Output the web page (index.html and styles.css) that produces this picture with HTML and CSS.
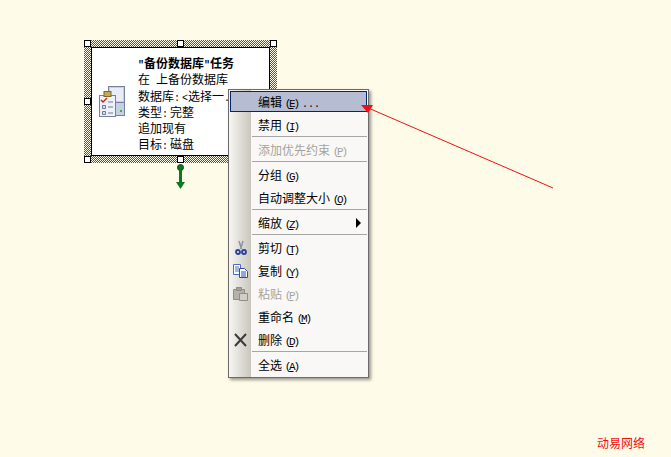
FILE: index.html
```html
<!DOCTYPE html>
<html lang="zh-CN">

<head>
      <meta charset="UTF-8">
      <title>备份数据库任务</title>
      <link rel="stylesheet" href="styles.css">
</head>

<body>
      <div class="canvas">

            <!-- task node -->
            <div class="task-frame">
                  <span class="handle h-tl"></span>
                  <span class="handle h-tc"></span>
                  <span class="handle h-tr"></span>
                  <span class="handle h-ml"></span>
                  <span class="handle h-mr"></span>
                  <span class="handle h-bl"></span>
                  <span class="handle h-bc"></span>
                  <span class="handle h-br"></span>
                  <div class="task-box">
                        <svg class="task-icon" width="27" height="32" viewBox="0 0 27 32">
                              <rect x="9.5" y="0.5" width="16" height="29" fill="#c5d0e4" stroke="#76829c" />
                              <rect x="11" y="2" width="13" height="13" fill="#e8edf7" />
                              <rect x="10" y="16" width="15" height="1" fill="#76829c" />
                              <rect x="21" y="24" width="2" height="2" fill="#30c040" />
                              <rect x="0.5" y="9.5" width="16" height="21" fill="#eef1f8" stroke="#76829c" />
                              <rect x="5" y="5.5" width="7" height="5" fill="#c9a94a" stroke="#7a6a2c" />
                              <path d="M2 14l2 2 4-4" fill="none" stroke="#d02020" stroke-width="1.4" />
                              <path d="M3.5 19.5h3v3h-3zM3.5 25.5h3v3h-3z" fill="#dde3f0" stroke="#6d7a96" />
                              <path d="M9 16h5M9 21h5M9 27h5" stroke="#6d7a96" />
                        </svg>
                        <div class="task-text">
                              <div class="task-line task-title"><span class="key">"</span>备份数据库<span class="key">"</span>任务</div>
                              <div class="task-line">在<span class="key"> </span>上备份数据库</div>
                              <div class="task-line">数据库<span class="key tight">: </span><span class="key">&lt;</span>选择一<span class="key">.</span></div>
                              <div class="task-line">类型<span class="key tight">: </span>完整</div>
                              <div class="task-line">追加现有</div>
                              <div class="task-line">目标<span class="key tight">: </span>磁盘</div>
                        </div>
                  </div>
            </div>

            <!-- green connector under the node -->
            <svg class="connector" width="13" height="28" viewBox="0 0 13 28">
                  <circle cx="6.5" cy="4.5" r="3" fill="#0a7a1e" stroke="#064d12" />
                  <path d="M5 7h3v13h-3z" fill="#0a7a1e" />
                  <path d="M2 19h9l-4.500 7z" fill="#0a7a1e" />
            </svg>

            <!-- context menu -->
            <div class="menu">
                  <div class="menu-item active"><span class="gutter"></span><span class="label">编辑 <span class="mnemonic">(<u>E</u>)</span><span class="dots">...</span></span></div>
                  <div class="menu-item"><span class="gutter"></span><span class="label">禁用 <span class="mnemonic">(<u>I</u>)</span></span></div>
                  <div class="menu-sep"></div>
                  <div class="menu-item disabled"><span class="gutter"></span><span class="label">添加优先约束 <span class="mnemonic">(<u>P</u>)</span></span></div>
                  <div class="menu-sep"></div>
                  <div class="menu-item"><span class="gutter"></span><span class="label">分组 <span class="mnemonic">(<u>G</u>)</span></span></div>
                  <div class="menu-item"><span class="gutter"></span><span class="label">自动调整大小 <span class="mnemonic">(<u>O</u>)</span></span></div>
                  <div class="menu-sep"></div>
                  <div class="menu-item"><span class="gutter"></span><span class="label">缩放 <span class="mnemonic">(<u>Z</u>)</span></span><span class="submenu-arrow"></span></div>
                  <div class="menu-sep"></div>
                  <div class="menu-item">
                        <span class="gutter">
                              <svg width="16" height="16" viewBox="0 0 16 16">
                                    <path d="M6 1l2.500 8M10 1l-2.500 8" stroke="#8a93a8" stroke-width="1.500" fill="none" />
                                    <circle cx="5" cy="12" r="2" fill="none" stroke="#2a3f9a" stroke-width="1.800" />
                                    <circle cx="11" cy="12" r="2" fill="none" stroke="#2a3f9a" stroke-width="1.800" />
                              </svg>
                        </span><span class="label">剪切 <span class="mnemonic">(<u>T</u>)</span></span>
                  </div>
                  <div class="menu-item">
                        <span class="gutter">
                              <svg width="16" height="16" viewBox="0 0 16 16">
                                    <path d="M0.500 1.500h7v10h-7z" fill="#fff" stroke="#4a6fc0" />
                                    <path d="M2 4h4M2 6h4M2 8h4" stroke="#4a6fc0" />
                                    <path d="M6.500 5.500h5l3 3v6h-8z" fill="#fff" stroke="#2a4fa8" />
                                    <path d="M8 9h5M8 11h5M8 13h5" stroke="#2a4fa8" />
                              </svg>
                        </span><span class="label">复制 <span class="mnemonic">(<u>Y</u>)</span></span>
                  </div>
                  <div class="menu-item disabled">
                        <span class="gutter">
                              <svg width="16" height="16" viewBox="0 0 16 16">
                                    <path d="M0.500 3.500h11v10h-11z" fill="#b5b3a9" stroke="#8f8d84" />
                                    <path d="M3.500 1.500h5v3h-5z" fill="#a19f96" stroke="#8f8d84" />
                                    <path d="M6.500 7.500h8v7h-8z" fill="#d0cec6" stroke="#8f8d84" />
                              </svg>
                        </span><span class="label">粘贴 <span class="mnemonic">(<u>P</u>)</span></span>
                  </div>
                  <div class="menu-item"><span class="gutter"></span><span class="label">重命名 <span class="mnemonic">(<u>M</u>)</span></span></div>
                  <div class="menu-item">
                        <span class="gutter">
                              <svg width="16" height="16" viewBox="0 0 16 16">
                                    <path d="M2 2l11 12M13 2l-11 12" stroke="#3a3a3a" stroke-width="2" />
                              </svg>
                        </span><span class="label">删除 <span class="mnemonic">(<u>D</u>)</span></span>
                  </div>
                  <div class="menu-sep"></div>
                  <div class="menu-item"><span class="gutter"></span><span class="label">全选 <span class="mnemonic">(<u>A</u>)</span></span></div>
            </div>

            <!-- red annotation arrow -->
            <svg class="annotation" width="671" height="457" viewBox="0 0 671 457">
                  <path d="M553 188L366 107" stroke="#f01010" fill="none" />
                  <path d="M361 105h12l-5 8z" fill="#f01010" />
            </svg>

            <div class="watermark">动易网络</div>
      </div>
</body>

</html>
```

FILE: styles.css
```css
* {
      box-sizing: border-box;
}

body {
      margin: 0;
      background-color: #fffbe9;
      font-family: "Noto Sans CJK SC", "Liberation Sans", sans-serif;
      font-size: 12px;
      color: #000;
}

.canvas {
      position: relative;
      width: 671px;
      height: 457px;
      overflow: hidden;
}

/* half width latin, as the bitmap font has it */
.key,
.dots {
      font-family: "Liberation Mono", monospace;
      font-size: 10px;
      white-space: pre;
}

.key.tight {
      letter-spacing: -2px;
}

.mnemonic {
      font-family: "Liberation Mono", monospace;
      font-size: 11px;
      letter-spacing: -2.2px;
      white-space: pre;
}

/* task node */

.task-frame {
      position: absolute;
      left: 84px;
      top: 40px;
      width: 193px;
      height: 123px;
      padding: 7px;
      background: repeating-conic-gradient(#555 0 25%, #fffbe9 0 50%) 0 0 / 2px 2px;
}

.task-box {
      display: flex;
      height: 100%;
      background: #fff;
      border: 1px solid #000;
      overflow: hidden;
}

.task-icon {
      flex: none;
      margin: 38px 0 0 7px;
}

.task-text {
      margin: 7px 0 0 12px;
      white-space: nowrap;
}

.task-line {
      height: 16.3px;
      line-height: 16px;
}

.task-title {
      font-weight: bold;
}

.handle {
      position: absolute;
      width: 7px;
      height: 7px;
      background: #fff;
      border: 1px solid #000;
}

.h-tl { left: 0; top: 0; }
.h-tc { left: 93px; top: 0; }
.h-tr { left: 186px; top: 0; }
.h-ml { left: 0; top: 58px; }
.h-mr { left: 186px; top: 58px; }
.h-bl { left: 0; top: 116px; }
.h-bc { left: 93px; top: 116px; }
.h-br { left: 186px; top: 116px; }

.connector {
      position: absolute;
      left: 174px;
      top: 163px;
}

/* context menu */

.menu {
      position: absolute;
      left: 228px;
      top: 89px;
      width: 141px;
      padding: 0 1px 1px;
      background: #f9f8f6;
      border: 1px solid #6b6b6b;
      box-shadow: 2px 2px 3px rgba(0, 0, 0, 0.4);
}

.menu::before {
      content: "";
      position: absolute;
      left: 0;
      top: 0;
      bottom: 0;
      width: 22px;
      background: linear-gradient(to right, #f7f6f2, #c9c6bd);
}

.menu-item {
      position: relative;
      display: flex;
      align-items: center;
      height: 23px;
      white-space: nowrap;
}

.menu-item.active {
      height: 21px;
      margin: 1px 0;
      background: #b6bdd2;
      outline: 1px solid #0a246a;
      outline-offset: -1px;
}

.menu-item.disabled {
      color: #a5a39b;
}

.gutter {
      flex: none;
      display: flex;
      align-items: center;
      justify-content: center;
      width: 21px;
      height: 100%;
}

.label {
      margin: 0 0 1px 7px;
}

.dots {
      margin-left: 4px;
}

.submenu-arrow {
      position: absolute;
      right: 6px;
      top: 7px;
      border-left: 5px solid #000;
      border-top: 5px solid transparent;
      border-bottom: 5px solid transparent;
}

.menu-sep {
      position: relative;
      height: 2px;
      margin-left: 22px;
      background: #a6a6a6;
      border-bottom: 1px solid #f9f8f6;
}

/* overlays */

.annotation {
      position: absolute;
      left: 0;
      top: 0;
      pointer-events: none;
}

.watermark {
      position: absolute;
      left: 597px;
      top: 434px;
      color: #f01010;
}
```
